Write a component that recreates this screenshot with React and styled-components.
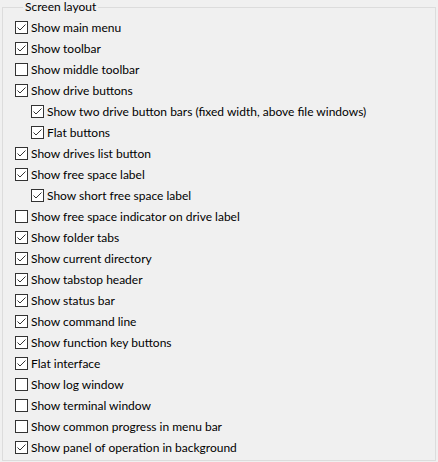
import React from 'react';
import styled, { createGlobalStyle } from 'styled-components';

const GlobalStyle = createGlobalStyle`
  html, body {
    margin: 0;
    padding: 0;
    background: #f0f0f0;
  }
  body {
    font-family: Lato, "Noto Sans", "Liberation Sans", sans-serif;
    font-size: 12px;
    color: #000;
  }
`;

const Page = styled.div`
  width: 438px;
  height: 462px;
  padding: 0 2px;
  box-sizing: border-box;
`;

const Group = styled.fieldset`
  margin: 0;
  border: 1px solid #dcdcdc;
  height: 461px;
  box-sizing: border-box;
  padding: 3px 0 0 12px;
  display: flex;
  flex-direction: column;
`;

const Title = styled.legend`
  padding: 0 2px;
  margin-left: 8px;
  line-height: 14px;
  font-size: 12px;
`;

const Row = styled.label`
  display: flex;
  flex: none;
  align-items: center;
  height: 21px;
  padding-left: ${p => p.$indent ? 16 : 0}px;
  white-space: nowrap;
`;

const Box = styled.span`
  width: 13px;
  height: 13px;
  box-sizing: border-box;
  border: 1px solid #333;
  background: #fff;
  margin-right: 3px;
  display: flex;
  align-items: center;
  justify-content: center;
  flex: none;
`;

const Text = styled.span`
  line-height: 16px;
`;

const items = [
  ['Show main menu', true],
  ['Show toolbar', true],
  ['Show middle toolbar', false],
  ['Show drive buttons', true],
  ['Show two drive button bars (fixed width, above file windows)', true, true],
  ['Flat buttons', true, true],
  ['Show drives list button', true],
  ['Show free space label', true],
  ['Show short free space label', true, true],
  ['Show free space indicator on drive label', false],
  ['Show folder tabs', true],
  ['Show current directory', true],
  ['Show tabstop header', true],
  ['Show status bar', true],
  ['Show command line', true],
  ['Show function key buttons', true],
  ['Flat interface', true],
  ['Show log window', false],
  ['Show terminal window', false],
  ['Show common progress in menu bar', false],
  ['Show panel of operation in background', true],
];

const Check = () => (
  <svg width="11" height="11" viewBox="0 0 11 11">
    <path d="M1.5 5.5 L4 8 L9.5 2.5" fill="none" stroke="#333" strokeWidth="1" />
  </svg>
);

const App = () => (
  <Page>
    <GlobalStyle />
    <Group>
      <Title>Screen layout</Title>
      {items.map(([label, checked, indent]) => (
        <Row key={label} $indent={indent}>
          <Box>{checked && <Check />}</Box>
          <Text>{label}</Text>
        </Row>
      ))}
    </Group>
  </Page>
);

export default App;
